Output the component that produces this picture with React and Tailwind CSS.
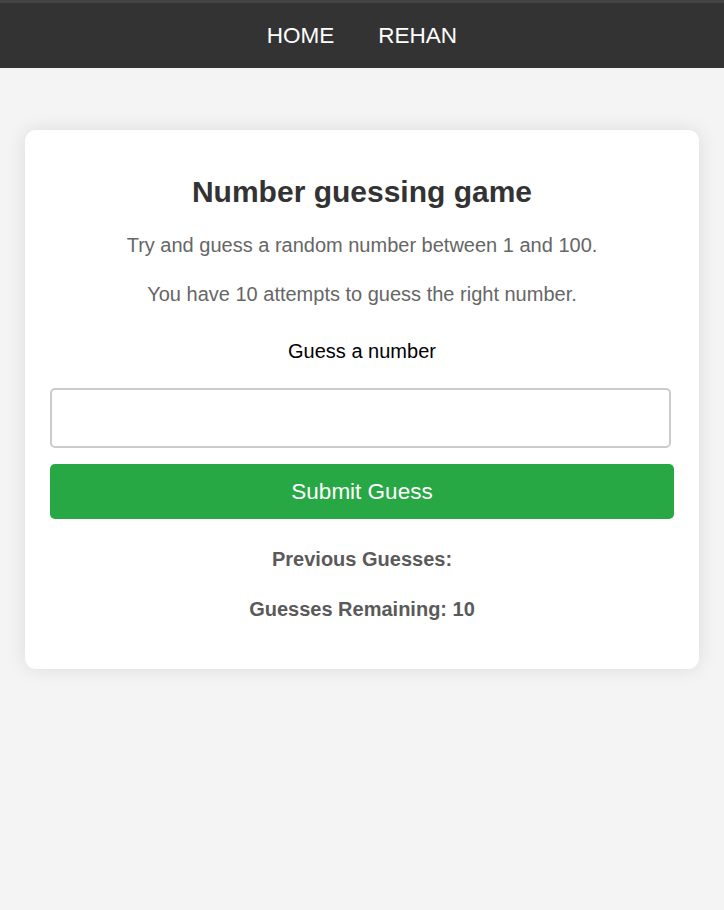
import { useState } from "react";

function App() {
  const [guess, setGuess] = useState("");

  return (
    <div className="min-h-[910px] bg-[#f4f4f4] font-['Liberation_Sans',Arial,sans-serif]">
      {/* Navbar */}
      <nav className="bg-[#333] border-t-[3px] border-[#444]">
        <div className="h-[65px] flex justify-center items-center gap-[44px] text-white text-[22.5px] leading-[26px] pt-[1px]">
          <a href="#">HOME</a>
          <a href="#">REHAN</a>
        </div>
      </nav>

      {/* Game card */}
      <div className="mx-[25px] mt-[62px] bg-white rounded-[11px] shadow-[0_0_20px_rgba(0,0,0,0.1)] px-[25px] pt-[25px] pb-[48px] text-center">
        <h1 className="mt-[19px] text-[30px] leading-[36px] font-bold text-[#333]">
          Number guessing game
        </h1>
        <p className="mt-[24px] text-[20px] leading-[23px] text-[#666]">
          Try and guess a random number between 1 and 100.
        </p>
        <p className="mt-[26px] text-[20px] leading-[23px] text-[#666]">
          You have 10 attempts to guess the right number.
        </p>
        <label className="block mt-[34px] text-[20px] leading-[23px] text-black">
          Guess a number
        </label>
        <input
          type="number"
          value={guess}
          onChange={(e) => setGuess(e.target.value)}
          className="block mt-[25px] w-[621px] h-[60px] border-2 border-[#ccc] rounded-[5px] px-3 text-[20px] outline-none"
        />
        <button className="block mt-[16px] w-full h-[55px] bg-[#28a745] rounded-[5px] text-white text-[22.5px]">
          Submit Guess
        </button>
        <p className="mt-[29px] text-[20px] leading-[23px] font-bold text-[#5a5a5a]">
          Previous Guesses:
        </p>
        <p className="mt-[27px] text-[20px] leading-[23px] font-bold text-[#5a5a5a]">
          Guesses Remaining: 10
        </p>
      </div>
    </div>
  );
}

export default App;
